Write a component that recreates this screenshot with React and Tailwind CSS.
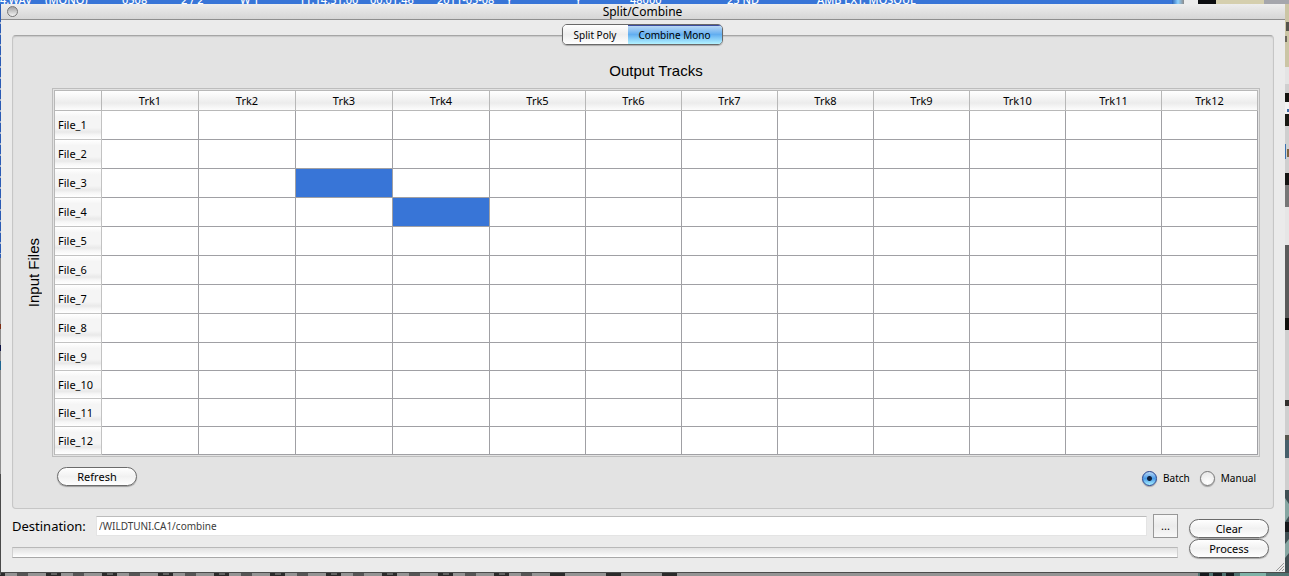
import React, { useState } from "react";
import clsx from "clsx";

const tracks = Array.from({ length: 12 }, (_, i) => `Trk${i + 1}`);
const files = Array.from({ length: 12 }, (_, i) => `File_${i + 1}`);

const takes = ["4.WAV", "(MONO)", "0508", "2 / 2", "W T", "11:14:51:00", "00:01:46", "2011-05-08", "Y", "Y", "48000", "25 ND", "AMB EXT. MOSQUE"];

const PillButton = ({ children }) => (
  <button
    type="button"
    className="h-[19px] w-20 rounded-full border border-[#6b6b6b] bg-linear-to-b from-white via-[#f1f1f1] to-white text-[11px] leading-4 shadow-[0_1px_1px_rgba(0,0,0,0.3)]"
  >
    {children}
  </button>
);

const Radio = ({ label, checked, onChange }) => (
  <label className="flex items-center gap-1.5">
    <input
      type="radio"
      name="mode"
      checked={checked}
      onChange={onChange}
      className="size-[15px] appearance-none rounded-full border border-[#777] bg-[radial-gradient(circle_at_50%_80%,#fff,#e4e4e4)] shadow-[0_1px_1px_rgba(0,0,0,0.3)] checked:border-[#23418f] checked:bg-[radial-gradient(circle,#10203c_0_2px,transparent_3px),linear-gradient(#b9d8f6,#4a9be8_50%,#a9f0ff)]"
    />
    {label}
  </label>
);

// The take list showing above the window
const TakeStrip = () => (
  <div className="flex h-1 overflow-hidden bg-[#2a2a2a]">
    <div className="grid min-w-0 flex-1 grid-cols-[45px_77px_59px_59px_59px_71px_67px_69px_69px_55px_97px_90px_auto] content-end bg-[#3875d7] text-[11px] leading-2 font-medium whitespace-nowrap text-white">
      {takes.map((take, i) => (
        <span key={i}>{take}</span>
      ))}
    </div>
    <div className="w-3 bg-linear-to-r from-[#2c63b8] via-[#8fd3ff] to-[#8a8a8a]" />
    <div className="w-3.5 bg-[#ececec]" />
    <div className="w-[18px] bg-[#0c0d10]" />
    <div className="w-12 bg-[#d5cfae]" />
    <div className="w-[25px] bg-[#a5a6ac]" />
  </div>
);

// Slivers of the desktop on either side of the window
const LeftEdge = () => (
  <svg className="w-px shrink-0 self-stretch" viewBox="0 0 1 568" preserveAspectRatio="none" aria-hidden="true">
    <rect width="1" height="568" fill="#8d8d8d" />
    <rect width="1" height="254" fill="#2a5bb5" />
    <path d="M.5 18v232" stroke="#a8b5cc" strokeDasharray="2 9" />
    <rect y="320" width="1" height="5" fill="#7d2c12" />
    <rect y="341" width="1" height="6" fill="#0c1244" />
    <rect y="357" width="1" height="9" fill="#1e6591" />
    <rect y="470" width="1" height="98" fill="#4a4a4a" />
  </svg>
);

const RightEdge = () => (
  <svg className="w-1 shrink-0 self-stretch" viewBox="0 0 4 568" preserveAspectRatio="none" aria-hidden="true">
    <rect width="4" height="568" fill="#cfcfcf" />
    <rect width="4" height="63" fill="#cbc5a5" />
    <rect y="18" x="1" width="3" height="9" fill="#55544c" />
    <rect y="32" width="2" height="6" fill="#6b6759" />
    <rect y="63" width="4" height="17" fill="#e4e4e4" />
    <rect y="89" width="4" height="9" fill="#14140f" />
    <rect y="98" width="4" height="12" fill="#f2f2f2" />
    <rect y="105" x="2" width="2" height="3" fill="#3f6da8" />
    <rect y="110" width="4" height="12" fill="#191913" />
    <rect y="140" width="1" height="15" fill="#3b72b0" />
    <rect y="145" x="2" width="2" height="8" fill="#7d6440" />
    <rect y="169" width="4" height="12" fill="#151513" />
    <rect y="181" width="4" height="22" fill="#777" />
    <rect y="203" width="4" height="38" fill="#e6e6e6" />
    <rect y="241" width="4" height="73" fill="#5b5b5b" />
    <rect y="314" width="4" height="12" fill="#11110e" />
    <rect y="396" width="4" height="6" fill="#32302e" />
    <rect y="431" width="4" height="5" fill="#56574f" />
    <rect y="436" width="4" height="18" fill="#47606c" />
    <rect y="486" width="4" height="82" fill="#3f4f53" />
    <path d="M0 494l4 6v12l-4 6zM0 540l4-5v14l-4 5z" fill="#86a6a2" />
    <path d="M0 518h4v10H0z" fill="#15181b" />
  </svg>
);

const BottomEdge = () => (
  <svg className="h-1 w-full" viewBox="0 0 1289 4" preserveAspectRatio="none" aria-hidden="true">
    <rect width="1289" height="4" fill="#949494" />
    <path d="M-10 2h690" stroke="#2b2b2b" strokeWidth="4" strokeDasharray="15 41" />
    <path d="M17 2h530" stroke="#555" strokeWidth="4" strokeDasharray="11 45" />
    <path d="M-5 2h560" stroke="#9a9a9a" strokeDasharray="6 50" />
    <rect x="1198" width="91" height="4" fill="#4f7270" />
    <path d="M1200 2h34" stroke="#15191d" strokeWidth="4" strokeDasharray="9 4" />
    <rect x="1240" width="26" height="4" fill="#7fb3a8" />
    <rect width="1289" height="1" fill="#4b4b4b" />
  </svg>
);

const TrackTable = () => {
  const [routes, setRoutes] = useState({ 2: 2, 3: 3 });

  const toggle = (row, col) => {
    setRoutes((prev) => ({ ...prev, [row]: prev[row] === col ? undefined : col }));
  };

  return (
    <div className="border border-[#bdbdbd] p-px">
      <table className="w-full table-fixed border-separate border-spacing-0 border-t border-l border-[#b8b8b8] bg-white">
        <thead>
          <tr className="h-5 bg-linear-to-b from-white via-[#ececec] via-60% to-white text-[11px] leading-4">
            <td className="w-[47px] border-r border-b border-[#b8b8b8] p-0" />
            {tracks.map((track, col) => (
              <th
                key={track}
                scope="col"
                className={clsx("border-r border-b border-[#b8b8b8] p-0 font-normal", col < 4 && "w-[97px]")}
              >
                {track}
              </th>
            ))}
          </tr>
        </thead>
        <tbody>
          {files.map((file, row) => (
            <tr key={file} className={row < 8 ? "h-[29px]" : "h-7"}>
              <th
                scope="row"
                className="border-r border-b border-[#c2c2c2] bg-[linear-gradient(#ffffff,#f5f5f5_20%,#f5f5f5_60%,#e9e9e9_75%,#f6f6f6_85%,#ffffff)] p-0 pl-[3px] text-left text-[11px] leading-4 font-normal"
              >
                {file}
              </th>
              {tracks.map((track, col) => (
                <td
                  key={track}
                  onClick={() => toggle(row, col)}
                  className={clsx("border-r border-b border-[#a0a0a4] p-0", routes[row] === col && "bg-[#3875d7]")}
                />
              ))}
            </tr>
          ))}
        </tbody>
      </table>
    </div>
  );
};

const App = () => {
  const [tab, setTab] = useState("combine");
  const [mode, setMode] = useState("batch");
  const [destination, setDestination] = useState("/WILDTUNI.CA1/combine");

  return (
    <div className="flex min-h-screen flex-col bg-[#949494] font-['Noto_Sans','Open_Sans',sans-serif] text-black">
      <TakeStrip />

      <div className="flex flex-1">
        <LeftEdge />

        <main className="relative flex min-w-0 flex-1 flex-col bg-[#ebebeb]">
          {/* Title bar */}
          <header className="flex h-4 items-center border-b border-[#8e8e8e] bg-linear-to-b from-[#ededed] to-[#d6d6d6] px-1.5">
            <button
              type="button"
              aria-label="Close"
              className="size-[11px] rounded-full border border-[#777] bg-linear-to-b from-[#a2a2a2] to-[#f4f4f4]"
            />
            <h1 className="flex-1 pr-3 text-center text-[12px] leading-4">Split/Combine</h1>
          </header>

          {/* Tab panel */}
          <section className="mx-[11px] mt-[15px] rounded-[4px] border border-[#c6c6c6] border-t-[#a6a6a6] bg-[#e3e3e3] pr-[13px] pb-[22px] pl-[11px] shadow-[inset_0_1px_1px_rgba(0,0,0,0.12)]">
            <div role="tablist" className="mx-auto -mt-3 flex h-[21px] w-[161px] overflow-hidden rounded-[5px] border border-[#696969] text-[10px] leading-4 shadow-[0_1px_1px_rgba(0,0,0,0.25)]">
              <button
                type="button"
                role="tab"
                aria-selected={tab === "split"}
                onClick={() => setTab("split")}
                className="w-[65px] bg-linear-to-b from-white via-[#ededed] to-white aria-selected:from-[#c3dcf5] aria-selected:via-[#62aef0] aria-selected:to-[#b4f3ff]"
              >
                Split Poly
              </button>
              <button
                type="button"
                role="tab"
                aria-selected={tab === "combine"}
                onClick={() => setTab("combine")}
                className="flex-1 bg-linear-to-b from-white via-[#ededed] to-white aria-selected:from-[#c3dcf5] aria-selected:via-[#62aef0] aria-selected:to-[#b4f3ff] aria-selected:shadow-[inset_0_1px_0_#3c4c9e]"
              >
                Combine Mono
              </button>
            </div>

            <h2 className="mt-[17px] mb-2 pl-7 text-center font-['Liberation_Sans',sans-serif] text-[15px] leading-[18px]">
              Output Tracks
            </h2>

            <div className="flex items-center gap-2">
              <h2 className="w-5 rotate-180 text-center font-['Liberation_Sans',sans-serif] text-[15px] leading-5 [writing-mode:vertical-rl]">
                Input Files
              </h2>
              <div className="min-w-0 flex-1">
                <TrackTable />
              </div>
            </div>

            <div className="mt-2.5 flex items-end justify-between pr-1 pl-[33px]">
              <PillButton>Refresh</PillButton>
              <div className="flex items-center gap-2.5 text-[10px] leading-4">
                <Radio label="Batch" checked={mode === "batch"} onChange={() => setMode("batch")} />
                <Radio label="Manual" checked={mode === "manual"} onChange={() => setMode("manual")} />
              </div>
            </div>
          </section>

          <footer className="mx-[11px] mt-[5px] mb-3 flex gap-[11px] pr-[5px]">
            <div className="min-w-0 flex-1">
              <div className="flex items-center gap-1.5">
                <label htmlFor="destination" className="w-[78px] text-[13px] leading-5">
                  Destination:
                </label>
                <input
                  id="destination"
                  type="text"
                  value={destination}
                  onChange={(e) => setDestination(e.target.value)}
                  className="h-5 min-w-0 flex-1 border border-[#e4e4e4] border-t-[#bcbcbc] bg-white px-0.5 text-[10px] leading-4 text-[#3c3c3c] outline-none"
                />
                <button
                  type="button"
                  aria-label="Browse"
                  className="h-6 w-[25px] border border-[#989898] bg-linear-to-b from-[#f8f8f8] via-[#ebebeb] to-[#f8f8f8] text-[11px] leading-4"
                >
                  ...
                </button>
              </div>
              <div
                role="progressbar"
                aria-valuenow={0}
                className="mt-[9px] h-[11px] border border-[#d0d0d0] border-t-[#b8b8b8] border-b-[#a8a8a8] bg-linear-to-b from-[#e2e2e2] via-[#efefef] to-white"
              />
            </div>
            <div className="flex flex-col gap-px pt-[5px]">
              <PillButton>Clear</PillButton>
              <PillButton>Process</PillButton>
            </div>
          </footer>

          <svg className="absolute right-0 bottom-0 size-2.5" viewBox="0 0 10 10" stroke="#9a9a9a" aria-hidden="true">
            <path d="M1 9l8-8M4 9l5-5M7 9l2-2" />
          </svg>
        </main>

        <RightEdge />
      </div>

      <BottomEdge />
    </div>
  );
};

export default App;
